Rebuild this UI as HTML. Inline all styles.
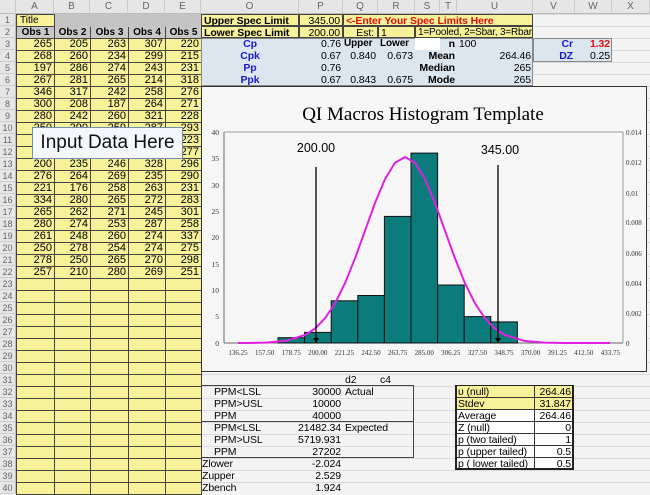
<!DOCTYPE html>
<html><head><meta charset="utf-8"><style>
*{margin:0;padding:0;box-sizing:border-box}
body{width:650px;height:494px;overflow:hidden;position:relative;background:#f3f3f3;font-family:"Liberation Sans",Arial,sans-serif;font-size:11px;color:#000}
.grid{position:absolute;left:201px;top:14px;width:449px;height:480px;
background-image:linear-gradient(#dadada 1px,transparent 1px);background-size:100% 12px}
.c{position:absolute;height:12px;line-height:12px;white-space:nowrap;font-size:10.5px;letter-spacing:-0.1px}
.r{text-align:right;padding-right:2px}
.ctr{text-align:center}
.b{font-weight:bold}
.blu{color:#1a1acc}
.hdr{position:absolute;top:0;height:14px;line-height:14px;background:#e6e6e6;color:#666;font-size:10px;text-align:center;border-right:1px solid #ccc;border-bottom:1px solid #bbb}
.rh{position:absolute;left:0;width:16px;height:12px;line-height:12px;background:#e6e6e6;color:#666;font-size:9px;text-align:center;border-bottom:1px solid #ccc;border-right:1px solid #bbb}
table{position:absolute;left:16px;top:14px;border-collapse:collapse;table-layout:fixed}
td{height:12px;line-height:11px;border:1px solid #444;background:#f7f29a;text-align:right;padding-right:2px;font-size:11px;overflow:hidden;white-space:nowrap}
tr.h td{background:#c8c8c8;text-align:center;font-weight:bold;font-size:10px;padding:0}
.y{background:#f7f29a}
.lb{background:#dce6ef}
</style></head><body>
<div class="grid"></div>
<div class="hdr" style="left:0;width:16px"></div>
<div class="hdr" style="left:16px;width:38px">A</div>
<div class="hdr" style="left:54px;width:36px">B</div>
<div class="hdr" style="left:90px;width:38px">C</div>
<div class="hdr" style="left:128px;width:37px">D</div>
<div class="hdr" style="left:165px;width:36px">E</div>
<div class="hdr" style="left:201px;width:98px">O</div>
<div class="hdr" style="left:299px;width:44px">P</div>
<div class="hdr" style="left:343px;width:35px">Q</div>
<div class="hdr" style="left:378px;width:37px">R</div>
<div class="hdr" style="left:415px;width:25px">S</div>
<div class="hdr" style="left:440px;width:17px">T</div>
<div class="hdr" style="left:457px;width:76px">U</div>
<div class="hdr" style="left:533px;width:42px">V</div>
<div class="hdr" style="left:575px;width:37px">W</div>
<div class="hdr" style="left:612px;width:38px">X</div>
<div class="rh" style="top:14px">1</div><div class="rh" style="top:26px">2</div><div class="rh" style="top:38px">3</div><div class="rh" style="top:50px">4</div><div class="rh" style="top:62px">5</div><div class="rh" style="top:74px">6</div><div class="rh" style="top:86px">7</div><div class="rh" style="top:98px">8</div><div class="rh" style="top:110px">9</div><div class="rh" style="top:122px">10</div><div class="rh" style="top:134px">11</div><div class="rh" style="top:146px">12</div><div class="rh" style="top:158px">13</div><div class="rh" style="top:170px">14</div><div class="rh" style="top:182px">15</div><div class="rh" style="top:194px">16</div><div class="rh" style="top:206px">17</div><div class="rh" style="top:218px">18</div><div class="rh" style="top:230px">19</div><div class="rh" style="top:242px">20</div><div class="rh" style="top:254px">21</div><div class="rh" style="top:266px">22</div><div class="rh" style="top:278px">23</div><div class="rh" style="top:290px">24</div><div class="rh" style="top:302px">25</div><div class="rh" style="top:314px">26</div><div class="rh" style="top:326px">27</div><div class="rh" style="top:338px">28</div><div class="rh" style="top:350px">29</div><div class="rh" style="top:362px">30</div><div class="rh" style="top:374px">31</div><div class="rh" style="top:386px">32</div><div class="rh" style="top:398px">33</div><div class="rh" style="top:410px">34</div><div class="rh" style="top:422px">35</div><div class="rh" style="top:434px">36</div><div class="rh" style="top:446px">37</div><div class="rh" style="top:458px">38</div><div class="rh" style="top:470px">39</div><div class="rh" style="top:482px">40</div>

<table>
<colgroup><col style="width:38px"><col style="width:36px"><col style="width:38px"><col style="width:37px"><col style="width:36px"></colgroup>
<tr><td style="text-align:left;padding-left:3px;font-size:10px">Title</td><td style="background:#c4c4c4;border-color:#c4c4c4"></td><td style="background:#c4c4c4;border-color:#c4c4c4"></td><td style="background:#c4c4c4;border-color:#c4c4c4"></td><td style="background:#c4c4c4;border-color:#c4c4c4"></td></tr>
<tr class="h"><td>Obs 1</td><td>Obs 2</td><td>Obs 3</td><td>Obs 4</td><td>Obs 5</td></tr>
<tr><td>265</td><td>205</td><td>263</td><td>307</td><td>220</td></tr>
<tr><td>268</td><td>260</td><td>234</td><td>299</td><td>215</td></tr>
<tr><td>197</td><td>286</td><td>274</td><td>243</td><td>231</td></tr>
<tr><td>267</td><td>281</td><td>265</td><td>214</td><td>318</td></tr>
<tr><td>346</td><td>317</td><td>242</td><td>258</td><td>276</td></tr>
<tr><td>300</td><td>208</td><td>187</td><td>264</td><td>271</td></tr>
<tr><td>280</td><td>242</td><td>260</td><td>321</td><td>228</td></tr>
<tr><td>250</td><td>290</td><td>259</td><td>287</td><td>293</td></tr>
<tr><td>262</td><td>270</td><td>281</td><td>255</td><td>223</td></tr>
<tr><td>244</td><td>268</td><td>272</td><td>266</td><td>277</td></tr>
<tr><td>200</td><td>235</td><td>246</td><td>328</td><td>296</td></tr>
<tr><td>276</td><td>264</td><td>269</td><td>235</td><td>290</td></tr>
<tr><td>221</td><td>176</td><td>258</td><td>263</td><td>231</td></tr>
<tr><td>334</td><td>280</td><td>265</td><td>272</td><td>283</td></tr>
<tr><td>265</td><td>262</td><td>271</td><td>245</td><td>301</td></tr>
<tr><td>280</td><td>274</td><td>253</td><td>287</td><td>258</td></tr>
<tr><td>261</td><td>248</td><td>260</td><td>274</td><td>337</td></tr>
<tr><td>250</td><td>278</td><td>254</td><td>274</td><td>275</td></tr>
<tr><td>278</td><td>250</td><td>265</td><td>270</td><td>298</td></tr>
<tr><td>257</td><td>210</td><td>280</td><td>269</td><td>251</td></tr>
<tr><td></td><td></td><td></td><td></td><td></td></tr><tr><td></td><td></td><td></td><td></td><td></td></tr><tr><td></td><td></td><td></td><td></td><td></td></tr><tr><td></td><td></td><td></td><td></td><td></td></tr><tr><td></td><td></td><td></td><td></td><td></td></tr><tr><td></td><td></td><td></td><td></td><td></td></tr><tr><td></td><td></td><td></td><td></td><td></td></tr><tr><td></td><td></td><td></td><td></td><td></td></tr><tr><td></td><td></td><td></td><td></td><td></td></tr><tr><td></td><td></td><td></td><td></td><td></td></tr><tr><td></td><td></td><td></td><td></td><td></td></tr><tr><td></td><td></td><td></td><td></td><td></td></tr><tr><td></td><td></td><td></td><td></td><td></td></tr><tr><td></td><td></td><td></td><td></td><td></td></tr><tr><td></td><td></td><td></td><td></td><td></td></tr><tr><td></td><td></td><td></td><td></td><td></td></tr><tr><td></td><td></td><td></td><td></td><td></td></tr><tr><td></td><td></td><td></td><td></td><td></td></tr>
</table>

<div style="position:absolute;left:32px;top:127px;width:151px;height:32px;background:#f4f7fb;border:1px solid #6f8fb0;font-size:19px;line-height:30px;text-align:center;color:#111">Input Data Here</div>

<div class="c y b" style="left:201px;top:14px;width:98px;padding-left:2px;border:1px solid #444">Upper Spec Limit</div>
<div class="c y r" style="left:299px;top:14px;width:44px;border:1px solid #444">345.00</div>
<div class="c y b" style="left:343px;top:14px;width:190px;color:#e01010;padding-left:2px;border:1px solid #444">&lt;-Enter Your Spec Limits Here</div>
<div class="c y b" style="left:201px;top:26px;width:98px;padding-left:2px;border:1px solid #444">Lower Spec Limit</div>
<div class="c y r" style="left:299px;top:26px;width:44px;border:1px solid #444">200.00</div>
<div class="c y" style="left:343px;top:26px;width:35px;text-align:right;padding-right:3px;border:1px solid #444">Est:</div>
<div class="c y" style="left:378px;top:26px;width:37px;padding-left:2px;border:1px solid #444">1</div>
<div class="c y" style="left:415px;top:26px;width:118px;padding-left:2px;border:1px solid #444;font-size:10px;letter-spacing:-0.2px">1=Pooled, 2=Sbar, 3=Rbar</div>

<div class="c lb" style="left:201px;top:38px;width:332px;height:48px;border:1px solid #888"></div>
<div class="c lb" style="left:533px;top:38px;width:79px;height:24px;border:1px solid #888"></div>
<div class="c" style="left:415px;top:38px;width:25px;background:#fff"></div>
<div class="c b blu ctr" style="left:201px;top:38px;width:98px">Cp</div>
<div class="c b blu ctr" style="left:201px;top:50px;width:98px">Cpk</div>
<div class="c b blu ctr" style="left:201px;top:62px;width:98px">Pp</div>
<div class="c b blu ctr" style="left:201px;top:74px;width:98px">Ppk</div>
<div class="c r" style="left:299px;top:38px;width:44px">0.76</div>
<div class="c r" style="left:299px;top:50px;width:44px">0.67</div>
<div class="c r" style="left:299px;top:62px;width:44px">0.76</div>
<div class="c r" style="left:299px;top:74px;width:44px">0.67</div>
<div class="c b" style="left:344px;top:38px;font-size:10px">Upper</div>
<div class="c b" style="left:380px;top:38px;font-size:10px">Lower</div>
<div class="c r" style="left:343px;top:50px;width:35px">0.840</div>
<div class="c r" style="left:378px;top:50px;width:37px">0.673</div>
<div class="c r" style="left:343px;top:74px;width:35px">0.843</div>
<div class="c r" style="left:378px;top:74px;width:37px">0.675</div>
<div class="c b r" style="left:440px;top:38px;width:17px">n</div>
<div class="c" style="left:459px;top:38px">100</div>
<div class="c b r" style="left:415px;top:50px;width:42px">Mean</div>
<div class="c b r" style="left:415px;top:62px;width:42px">Median</div>
<div class="c b r" style="left:415px;top:74px;width:42px">Mode</div>
<div class="c r" style="left:457px;top:50px;width:76px">264.46</div>
<div class="c r" style="left:457px;top:62px;width:76px">265</div>
<div class="c r" style="left:457px;top:74px;width:76px">265</div>
<div class="c b blu r" style="left:533px;top:38px;width:42px">Cr</div>
<div class="c b blu r" style="left:533px;top:50px;width:42px">DZ</div>
<div class="c b r" style="left:575px;top:38px;width:37px;color:#e01010">1.32</div>
<div class="c r" style="left:575px;top:50px;width:37px">0.25</div>

<div class="c" style="left:345px;top:374px">d2</div>
<div class="c" style="left:380px;top:374px">c4</div>
<div style="position:absolute;left:201px;top:385px;width:213px;height:73px;border:1px solid #444;border-left:none"></div>
<div style="position:absolute;left:201px;top:421px;width:213px;height:1px;background:#444"></div>
<div class="c" style="left:214px;top:386px">PPM&lt;LSL</div>
<div class="c" style="left:214px;top:398px">PPM&gt;USL</div>
<div class="c" style="left:214px;top:410px">PPM</div>
<div class="c" style="left:214px;top:422px">PPM&lt;LSL</div>
<div class="c" style="left:214px;top:434px">PPM&gt;USL</div>
<div class="c" style="left:214px;top:446px">PPM</div>
<div class="c" style="left:202px;top:458px">Zlower</div>
<div class="c" style="left:202px;top:470px">Zupper</div>
<div class="c" style="left:202px;top:482px">Zbench</div>
<div class="c r" style="left:280px;top:386px;width:63px">30000</div>
<div class="c r" style="left:280px;top:398px;width:63px">10000</div>
<div class="c r" style="left:280px;top:410px;width:63px">40000</div>
<div class="c r" style="left:280px;top:422px;width:63px">21482.34</div>
<div class="c r" style="left:280px;top:434px;width:63px">5719.931</div>
<div class="c r" style="left:280px;top:446px;width:63px">27202</div>
<div class="c r" style="left:280px;top:458px;width:63px">-2.024</div>
<div class="c r" style="left:280px;top:470px;width:63px">2.529</div>
<div class="c r" style="left:280px;top:482px;width:63px">1.924</div>
<div class="c" style="left:345px;top:386px">Actual</div>
<div class="c" style="left:345px;top:422px">Expected</div>

<div style="position:absolute;left:455px;top:385px;width:119px;height:85px;border:2px solid #222;background:#fff"></div>
<div class="c" style="left:457px;top:386px;width:115px;background:#f7f29a"></div>
<div class="c" style="left:457px;top:398px;width:115px;background:#f7f29a"></div>
<div style="position:absolute;left:534px;top:386px;width:1px;height:83px;background:#333"></div>
<div style="position:absolute;left:457px;top:397px;width:115px;height:72px;background:repeating-linear-gradient(#333 0 1px,transparent 1px 12px)"></div>
<div class="c" style="left:458px;top:386px">υ (null)</div>
<div class="c" style="left:458px;top:398px">Stdev</div>
<div class="c" style="left:458px;top:410px">Average</div>
<div class="c" style="left:458px;top:422px">Z (null)</div>
<div class="c" style="left:458px;top:434px">p (two tailed)</div>
<div class="c" style="left:458px;top:446px">p (upper tailed)</div>
<div class="c" style="left:458px;top:458px">p ( lower tailed)</div>
<div class="c r" style="left:535px;top:386px;width:38px">264.46</div>
<div class="c r" style="left:535px;top:398px;width:38px">31.847</div>
<div class="c r" style="left:535px;top:410px;width:38px">264.46</div>
<div class="c r" style="left:535px;top:422px;width:38px">0</div>
<div class="c r" style="left:535px;top:434px;width:38px">1</div>
<div class="c r" style="left:535px;top:446px;width:38px">0.5</div>
<div class="c r" style="left:535px;top:458px;width:38px">0.5</div>

<svg width="650" height="494" style="position:absolute;left:0;top:0" font-family="Liberation Serif, serif">
<rect x="201.5" y="86.5" width="445" height="285" fill="#f6f6f6" stroke="#333"/>
<text x="423" y="120" text-anchor="middle" font-size="19">QI Macros Histogram Template</text>
<line x1="224" y1="132" x2="224" y2="343" stroke="#666"/>
<line x1="224" y1="343" x2="623" y2="343" stroke="#666"/>
<line x1="623" y1="132" x2="623" y2="343" stroke="#999"/>
<line x1="224" y1="132" x2="623" y2="132" stroke="#999"/>
<g font-size="7.5" fill="#333" text-anchor="end">
<text x="219" y="135">40</text><text x="219" y="161">35</text><text x="219" y="188">30</text><text x="219" y="214">25</text><text x="219" y="240">20</text><text x="219" y="267">15</text><text x="219" y="293">10</text><text x="219" y="319">5</text><text x="219" y="346">0</text>
</g>
<g font-size="7" fill="#333">
<text x="626" y="135">0.014</text><text x="626" y="165">0.012</text><text x="626" y="196">0.01</text><text x="626" y="225">0.008</text><text x="626" y="256">0.006</text><text x="626" y="286">0.004</text><text x="626" y="316">0.002</text><text x="626" y="346">0</text>
</g>
<g font-size="7" fill="#333" text-anchor="middle">
<text x="238" y="355">136.25</text><text x="264.6" y="355">157.50</text><text x="291.2" y="355">178.75</text><text x="317.8" y="355">200.00</text><text x="344.4" y="355">221.25</text><text x="371" y="355">242.50</text><text x="397.6" y="355">263.75</text><text x="424.2" y="355">285.00</text><text x="450.8" y="355">306.25</text><text x="477.4" y="355">327.50</text><text x="504" y="355">348.75</text><text x="530.6" y="355">370.00</text><text x="557.2" y="355">391.25</text><text x="583.8" y="355">412.50</text><text x="610.4" y="355">433.75</text>
</g>
<g fill="#0b7b7b" stroke="#111" stroke-width="1">
<rect x="278" y="337.7" width="26.6" height="5.3"/>
<rect x="304.6" y="332.4" width="26.6" height="10.6"/>
<rect x="331.2" y="300.8" width="26.6" height="42.2"/>
<rect x="357.8" y="295.5" width="26.6" height="47.5"/>
<rect x="384.4" y="216.4" width="26.6" height="126.6"/>
<rect x="411" y="153.1" width="26.6" height="189.9"/>
<rect x="437.6" y="285" width="26.6" height="58"/>
<rect x="464.2" y="316.6" width="26.6" height="26.4"/>
<rect x="490.8" y="321.9" width="26.6" height="21.1"/>
</g>
<polyline fill="none" stroke="#e020e0" stroke-width="2" points="238,343 245.8,343 265.7,342.6 285.6,340.9 305.5,334.8 315.45,328.2 325.4,317.8 335.35,302.8 345.3,282.6 355.25,257.8 365.2,230.2 375.15,202.6 385.1,178.9 395.05,162.7 405,157 414.95,162.7 424.9,178.9 434.85,202.6 444.8,230.2 454.75,257.8 464.7,282.6 474.65,302.8 484.6,317.8 494.55,328.2 504.5,334.8 524.4,340.9 544.3,342.6 564.2,343 610,343"/>
<line x1="316" y1="167" x2="316" y2="339" stroke="#000" stroke-width="1.3"/>
<polygon points="313,338 319,338 316,343" fill="#000"/>
<line x1="498" y1="165" x2="498" y2="339" stroke="#000" stroke-width="1.3"/>
<polygon points="495,338 501,338 498,343" fill="#000"/>
<text x="316" y="152" text-anchor="middle" font-size="12.5" font-family="Liberation Sans, sans-serif">200.00</text>
<text x="500" y="154" text-anchor="middle" font-size="12.5" font-family="Liberation Sans, sans-serif">345.00</text>
</svg>
</body></html>
